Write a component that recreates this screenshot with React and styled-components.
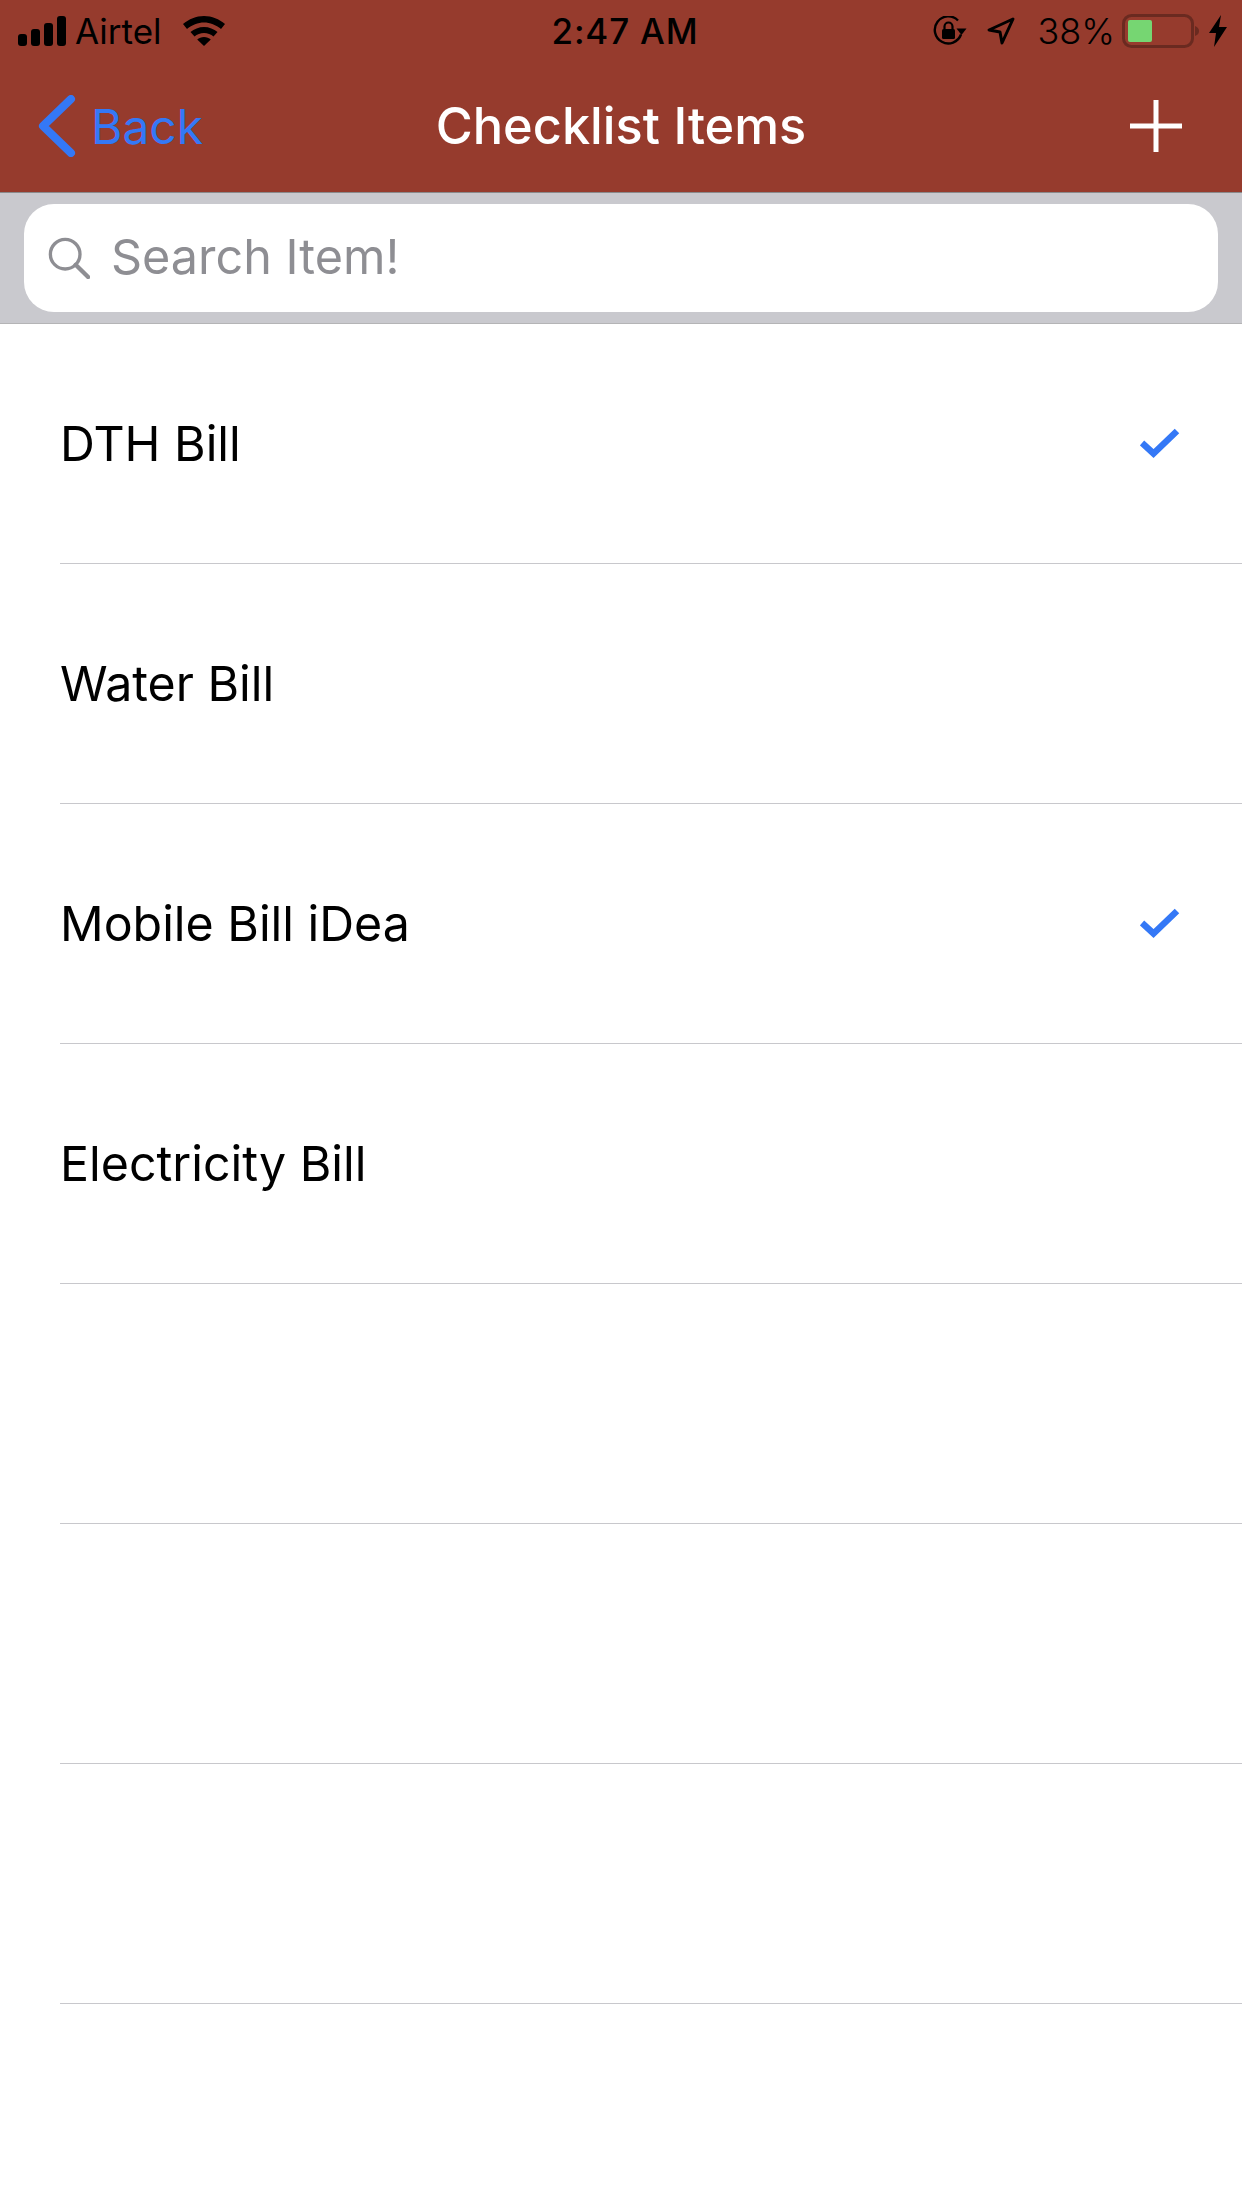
import styled, { createGlobalStyle } from "styled-components";

const GlobalStyle = createGlobalStyle`
  html, body {
    margin: 0;
    padding: 0;
    background: #fff;
    font-family: Inter, "Noto Sans", "Liberation Sans", sans-serif;
  }
`;

const Screen = styled.div`
  width: 1242px;
  height: 2208px;
  overflow: hidden;
  background: #fff;
`;

const Header = styled.header`
  height: 192px;
  background: #963b2d;
  border-bottom: 1px solid #8a8a8c;
`;

const StatusBar = styled.div`
  height: 60px;
  padding-top: 2px;
  box-sizing: border-box;
  display: grid;
  grid-template-columns: 1fr auto 1fr;
  align-items: center;
  color: #000;
  font-size: 35px;
`;

const StatusLeft = styled.div`
  display: flex;
  align-items: center;
  padding-left: 18px;
`;

const Carrier = styled.span`
  margin-left: 9px;
`;

const Clock = styled.span`
  font-weight: 500;
  letter-spacing: 0.8px;
  padding-left: 8px;
`;

const StatusRight = styled.div`
  display: flex;
  align-items: center;
  justify-content: flex-end;
  padding-right: 15px;
`;

const Percent = styled.span`
  margin: 0 7px 0 22px;
  font-size: 36px;
  font-weight: 300;
`;

const NavBar = styled.div`
  height: 132px;
  position: relative;
  display: flex;
  align-items: center;
  justify-content: space-between;
  padding: 0 60px 6px 38px;
`;

const BackLink = styled.div`
  display: flex;
  align-items: center;
  color: #3478f6;
  font-size: 48px;
  gap: 15px;
`;

const Title = styled.h1`
  position: absolute;
  left: 0;
  right: 0;
  top: 33px;
  margin: 0;
  text-align: center;
  color: #fff;
  font-size: 50.5px;
  line-height: 66px;
  font-weight: 500;
`;

const SearchSection = styled.div`
  background: #c9c9ce;
  border-bottom: 1px solid #b4b4b6;
  padding: 11px 24px;
`;

const SearchField = styled.div`
  height: 108px;
  background: #fff;
  border-radius: 30px;
  display: flex;
  align-items: center;
  padding-left: 24px;
  gap: 21px;
  color: #8e8e93;
  font-size: 48.5px;
`;

const SearchText = styled.span`
  margin-bottom: 4px;
`;

const List = styled.div`
  display: flex;
  flex-direction: column;
`;

const Row = styled.div`
  height: 239px;
  margin-left: 60px;
  padding: 0 62px 0 0;
  border-bottom: 1px solid #c8c8cc;
  display: flex;
  align-items: center;
  justify-content: space-between;
  font-size: 48.3px;
  color: #000;
`;

const Signal = () => (
  <svg width="48" height="30" viewBox="0 0 48 30" fill="#000">
    <rect x="0" y="18" width="9" height="12" rx="3" />
    <rect x="13" y="13" width="9" height="17" rx="3" />
    <rect x="26" y="7" width="9" height="23" rx="3" />
    <rect x="39" y="0" width="9" height="30" rx="3" />
  </svg>
);

const Wifi = () => (
  <svg width="42" height="30" viewBox="0 0 42 30" fill="#000" style={{ marginLeft: 21 }}>
    <path d="M21 0C13 0 6 3 0 8l4 5c5-4 11-6.500 17-6.500S33 9 38 13l4-5C36 3 29 0 21 0z" />
    <path d="M21 11c-5 0-10 2-13.500 5l4 4.500c2.500-2 6-3.500 9.500-3.500s7 1.500 9.500 3.500l4-4.500C31 13 26 11 21 11z" />
    <path d="M21 21c-2.700 0-5 1-6.800 2.500L21 30l6.800-6.500C26 22 23.700 21 21 21z" />
  </svg>
);

const RotationLock = () => (
  <svg width="34" height="30" viewBox="0 0 34 30">
    <path d="M28 18.500A13.500 13.500 0 1 1 25 4.500" fill="none" stroke="#000" strokeWidth="2.400" />
    <path d="M23.500 12.500h10l-5 6.500z" fill="#000" />
    <rect x="9" y="13" width="13" height="10" rx="1.500" fill="#000" />
    <path d="M11.500 13v-2.500a4 4 0 0 1 8 0V13" fill="none" stroke="#000" strokeWidth="2.200" />
  </svg>
);

const LocationArrow = () => (
  <svg width="28" height="28" viewBox="0 0 28 28" style={{ marginLeft: 20 }}>
    <path d="M26 2L2 13l11 2 2 11z" fill="none" stroke="#000" strokeWidth="3" strokeLinejoin="round" />
  </svg>
);

const Battery = () => (
  <svg width="78" height="34" viewBox="0 0 78 34">
    <rect x="1.500" y="1.500" width="69" height="31" rx="8" fill="none" stroke="#6a2a20" strokeWidth="3" />
    <rect x="6" y="6" width="24" height="22" rx="2" fill="#76d672" />
    <path d="M73 12c3 1 4 3 4 5s-1 4-4 5z" fill="#6a2a20" />
  </svg>
);

const Bolt = () => (
  <svg width="18" height="32" viewBox="0 0 18 32" style={{ marginLeft: 9 }}>
    <path d="M12 0L0 18h7L5 32 18 12h-8z" fill="#000" />
  </svg>
);

const BackChevron = () => (
  <svg width="38" height="62" viewBox="0 0 38 62">
    <path d="M33 4L5 31l28 27" fill="none" stroke="#3478f6" strokeWidth="8" strokeLinecap="round" strokeLinejoin="round" />
  </svg>
);

const Plus = () => (
  <svg width="52" height="52" viewBox="0 0 52 52" fill="#fff">
    <rect x="23.500" y="0" width="5" height="52" />
    <rect x="0" y="23.500" width="52" height="5" />
  </svg>
);

const SearchIcon = () => (
  <svg width="42" height="42" viewBox="0 0 44 44" fill="none" stroke="#8e8e93" strokeWidth="3.500">
    <circle cx="18" cy="18" r="15.500" />
    <path d="M29 29l13 13" strokeLinecap="round" strokeWidth="4.500" />
  </svg>
);

const Check = () => (
  <svg width="40" height="32" viewBox="0 0 40 32">
    <path d="M2 15l11.500 10.500L37 3" fill="none" stroke="#3478f6" strokeWidth="6.500" />
  </svg>
);

const rows = [
  { label: "DTH Bill", checked: true },
  { label: "Water Bill" },
  { label: "Mobile Bill iDea", checked: true },
  { label: "Electricity Bill" },
  { label: "" },
  { label: "" },
  { label: "" },
];

export default function App() {
  return (
    <Screen>
      <GlobalStyle />
      <Header>
        <StatusBar>
          <StatusLeft>
            <Signal />
            <Carrier>Airtel</Carrier>
            <Wifi />
          </StatusLeft>
          <Clock>2:47 AM</Clock>
          <StatusRight>
            <RotationLock />
            <LocationArrow />
            <Percent>38%</Percent>
            <Battery />
            <Bolt />
          </StatusRight>
        </StatusBar>
        <NavBar>
          <BackLink>
            <BackChevron />
            Back
          </BackLink>
          <Title>Checklist Items</Title>
          <Plus />
        </NavBar>
      </Header>
      <SearchSection>
        <SearchField>
          <SearchIcon />
          <SearchText>Search Item!</SearchText>
        </SearchField>
      </SearchSection>
      <List>
        {rows.map((row, i) => (
          <Row key={i}>
            {row.label}
            {row.checked && <Check />}
          </Row>
        ))}
      </List>
    </Screen>
  );
}
